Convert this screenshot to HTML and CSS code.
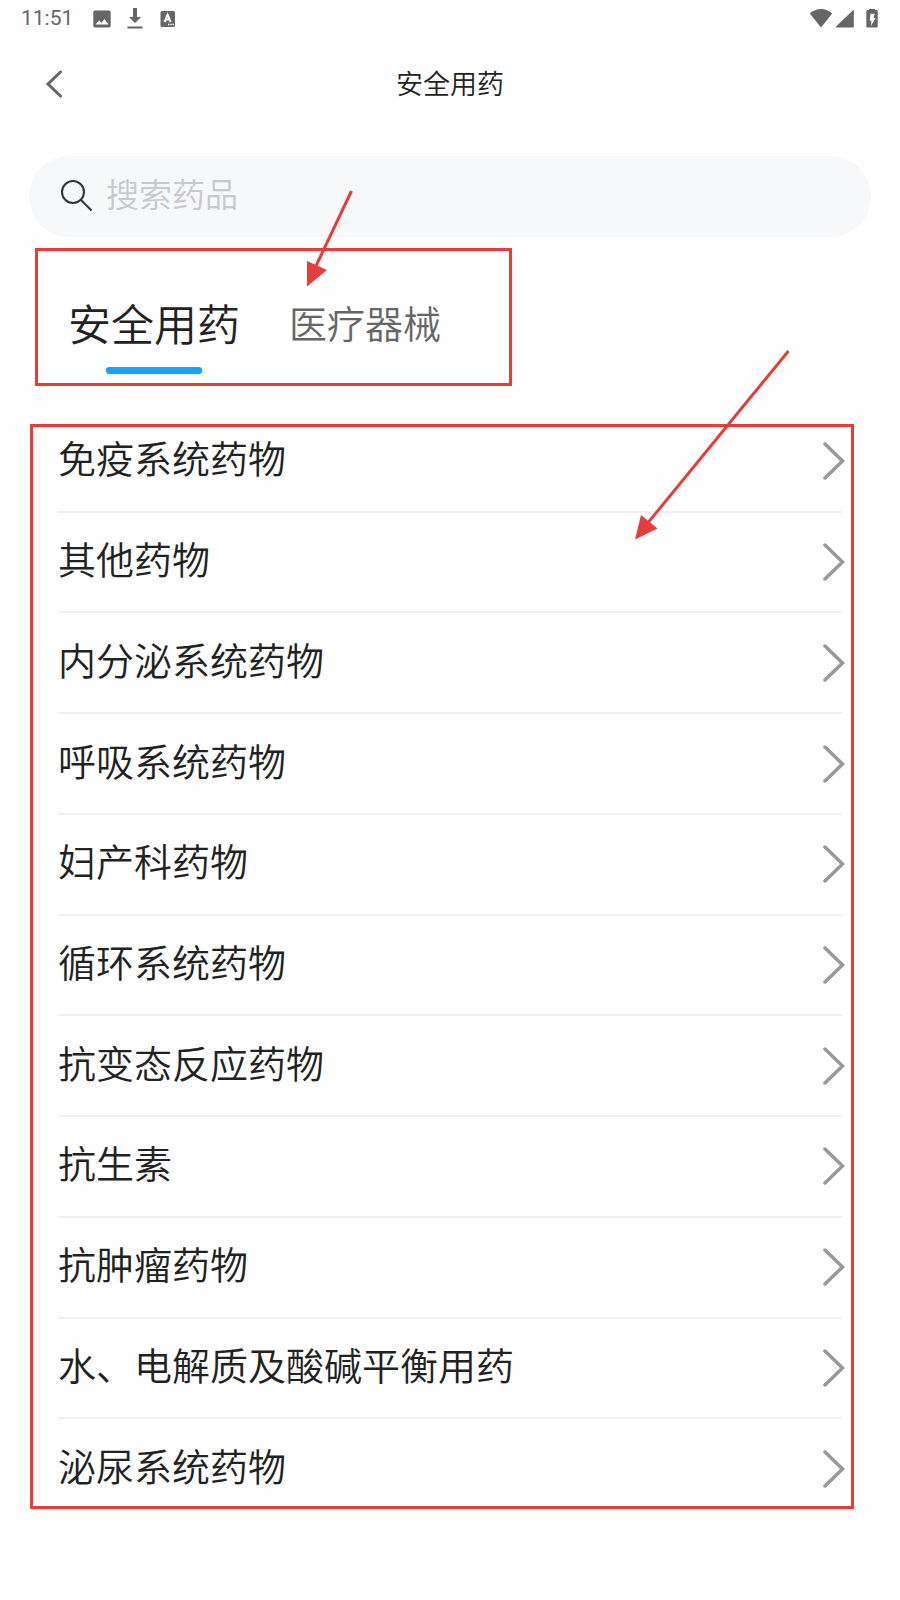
FILE: index.html
```html
<!DOCTYPE html>
<html lang="zh-CN">
<head>
    <meta charset="UTF-8">
    <title>安全用药</title>
    <meta name="viewport" content="width=device-width, initial-scale=1.0">
    <link rel="stylesheet" href="styles.css">
</head>
<body>
    <!-- Status bar -->
    <div class="status-bar">
        <span class="time">11:51</span>
        <svg class="status-image" width="18" height="18" viewBox="0 0 18 18">
            <path fill="#666" fill-rule="evenodd" d="M2 0.500h14a1.700 1.700 0 0 1 1.700 1.700v13.600a1.700 1.700 0 0 1-1.700 1.700H2a1.700 1.700 0 0 1-1.700-1.700V2.200A1.700 1.700 0 0 1 2 0.500zM2.500 14.500h13l-4-5.500-3 3.700-2.300-2.400z"/>
        </svg>
        <svg class="status-download" width="16" height="22" viewBox="0 0 16 22">
            <path fill="#666" d="M6 0h4v9h4l-6 6-6-6h4zM0.500 18.500h15v2h-15z"/>
        </svg>
        <svg class="status-input" width="16" height="18" viewBox="0 0 16 18">
            <rect x="0.500" y="1" width="14.500" height="16" rx="1.500" fill="#666"/>
            <path fill="none" stroke="#fff" stroke-width="2" d="M4.500 12L7.600 4.700 10.700 12M5.500 9.600h4.200"/>
            <path fill="#fff" d="M8 13.800h1.400v1.400H8zM10.300 13.800h1.400v1.400h-1.400zM12.600 13.800H14v1.400h-1.400z"/>
        </svg>
        <div class="status-right">
            <svg width="24" height="20" viewBox="0 0 24 20">
                <path fill="#666" d="M12 18.500L0.800 4.500Q5.500 0 12 0t11.200 4.500z"/>
            </svg>
            <svg width="18" height="20" viewBox="0 0 18 20">
                <path fill="#666" d="M17.800 0.500v18H0v-1z"/>
            </svg>
            <svg class="battery" width="12" height="20" viewBox="0 0 12 20">
                <path fill="#666" d="M3 0h6v1h1.500a1.200 1.200 0 0 1 1.200 1.200v15.100a1.200 1.200 0 0 1-1.200 1.200h-9a1.200 1.200 0 0 1-1.200-1.200V2.200A1.200 1.200 0 0 1 1.500 1H3z"/>
                <path fill="#fff" d="M4.500 4.700h4.200L7.500 9h2L5 17l0.400-5.200H3.700z"/>
            </svg>
        </div>
    </div>

    <!-- Title bar -->
    <header class="header">
        <button type="button" class="back" aria-label="返回">
            <svg width="18" height="28" viewBox="0 0 18 28">
                <path fill="none" stroke="#666" stroke-width="3" stroke-linecap="round" d="M15.500 2L3 14l12.500 12"/>
            </svg>
        </button>
        <h1>安全用药</h1>
    </header>

    <!-- Search -->
    <form class="search">
        <label for="keyword" aria-label="搜索药品">
            <svg width="32" height="32" viewBox="0 0 32 32">
                <circle cx="12" cy="12" r="11" fill="none" stroke="#333" stroke-width="2"/>
                <path stroke="#333" stroke-width="2" d="M20 20l10.500 10.500"/>
            </svg>
        </label>
        <input type="text" id="keyword" name="keyword" placeholder="搜索药品">
    </form>

    <!-- Tabs -->
    <nav class="tabs">
        <button type="button" class="tab active">安全用药</button>
        <button type="button" class="tab">医疗器械</button>
        <div class="mark mark-tabs"></div>
        <svg class="arrow arrow-tabs" width="50" height="100" viewBox="0 0 50 100">
            <path stroke="#e53c3c" stroke-width="3" d="M46.500 2L10 79"/>
            <path fill="#e53c3c" d="M2 97.500V72l20 9z"/>
        </svg>
    </nav>

    <!-- Category list -->
    <main class="category">
        <ul class="list">
            <li><a href="#">免疫系统药物</a></li>
            <li><a href="#">其他药物</a></li>
            <li><a href="#">内分泌系统药物</a></li>
            <li><a href="#">呼吸系统药物</a></li>
            <li><a href="#">妇产科药物</a></li>
            <li><a href="#">循环系统药物</a></li>
            <li><a href="#">抗变态反应药物</a></li>
            <li><a href="#">抗生素</a></li>
            <li><a href="#">抗肿瘤药物</a></li>
            <li><a href="#">水、电解质及酸碱平衡用药</a></li>
            <li><a href="#">泌尿系统药物</a></li>
        </ul>
        <div class="mark mark-list"></div>
        <svg class="arrow arrow-list" width="160" height="194" viewBox="0 0 160 194">
            <path stroke="#e53c3c" stroke-width="3" d="M156.500 3L15 176"/>
            <path fill="#e53c3c" d="M3 191.500L9 167l16.500 13.500z"/>
        </svg>
    </main>

    <script>
        // Append the chevron to every row
        const chevron = '<svg class="chevron" width="22" height="38" viewBox="0 0 22 38">' +
            '<path fill="none" stroke="#999" stroke-width="3.500" stroke-linecap="round" d="M2 2l17.500 17L2 36"/></svg>';
        document.querySelectorAll(".list a").forEach(function(row) {
            row.insertAdjacentHTML("beforeend", chevron);
        });

        // Switch tabs
        const tabs = document.querySelectorAll(".tab");
        tabs.forEach(function(tab) {
            tab.addEventListener("click", function() {
                tabs.forEach(function(t) { t.classList.remove("active"); });
                tab.classList.add("active");
            });
        });
    </script>
</body>
</html>
```
FILE: styles.css
```css
* {
    box-sizing: border-box;
    margin: 0;
    padding: 0;
}

body {
    font-family: "Noto Sans CJK SC", sans-serif;
    font-weight: 350;
    background-color: #fefefe;
    color: #222;
}

svg {
    display: block;
    flex-shrink: 0;
}

button {
    border: none;
    background: none;
    font-family: inherit;
    font-weight: inherit;
    cursor: pointer;
}

/* Status bar */
.status-bar {
    display: flex;
    align-items: center;
    height: 37px;
    padding: 0 22px 0 21px;
}
.time {
    font-family: Roboto, sans-serif;
    font-size: 21px;
    font-weight: 400;
    line-height: 37px;
    color: #666;
    margin-right: 20px;
}
.status-image {
    margin-right: 16px;
}
.status-download {
    margin-right: 17px;
}
.status-right {
    display: flex;
    align-items: center;
    gap: 3px;
    margin-left: auto;
}
.battery {
    margin-left: 9px;
}

/* Title bar */
.header {
    display: grid;
    grid-template-columns: 1fr auto 1fr;
    align-items: center;
    height: 94px;
    padding: 0 45px;
}
.back {
    width: 18px;
    height: 28px;
}
h1 {
    font-size: 27px;
    font-weight: inherit;
    line-height: 40px;
    padding-bottom: 2px;
}

/* Search */
.search {
    display: flex;
    align-items: center;
    gap: 13px;
    height: 81px;
    margin: 25px 29px 0;
    padding: 0 32px 2px;
    background-color: #f7f8fa;
    border-radius: 41px;
}
.search input {
    flex: 1;
    min-width: 0;
    height: 60px;
    padding-bottom: 6px;
    border: none;
    outline: none;
    background: none;
    font-family: inherit;
    font-weight: inherit;
    font-size: 33px;
    color: #222;
}
.search input::placeholder {
    color: #c8c9cb;
}

/* Tabs */
.tabs {
    position: relative;
    display: flex;
    align-items: flex-start;
    gap: 49px;
    margin-top: 11px;
    padding: 34px 68px 12px;
}
.tab {
    font-size: 38px;
    line-height: 80px;
    color: #666;
}
.tab.active {
    font-size: 43px;
    color: #222;
}
.tab.active::after {
    content: "";
    display: block;
    width: 96px;
    height: 7px;
    margin: 5px auto 0;
    border-radius: 3px;
    background-color: #18a3ff;
}

/* Category list */
.category {
    position: relative;
    margin-top: 26px;
    padding: 0 58px;
}
.list {
    display: grid;
    grid-auto-rows: 1fr;
    height: 1108px;
    list-style: none;
}
.list li {
    border-bottom: 2px solid #f1f1f1;
}
.list li:last-child {
    border-bottom-color: transparent;
}
.list a {
    display: flex;
    align-items: center;
    justify-content: space-between;
    height: 100%;
    margin-right: -3px;
    padding-bottom: 8px;
    font-size: 38px;
    line-height: 56px;
    color: #222;
    text-decoration: none;
}
.chevron {
    margin-top: 8px;
}

/* Red marks laid over the page */
.mark {
    position: absolute;
    border: 3px solid #e53c3c;
    pointer-events: none;
}
.mark-tabs {
    top: 0;
    left: 35px;
    width: 477px;
    height: 138px;
}
.mark-list {
    top: 12px;
    right: 46px;
    bottom: 11px;
    left: 30px;
}
.arrow {
    position: absolute;
    pointer-events: none;
}
.arrow-tabs {
    top: -59px;
    left: 305px;
}
.arrow-list {
    top: -64px;
    right: 108px;
}
```
